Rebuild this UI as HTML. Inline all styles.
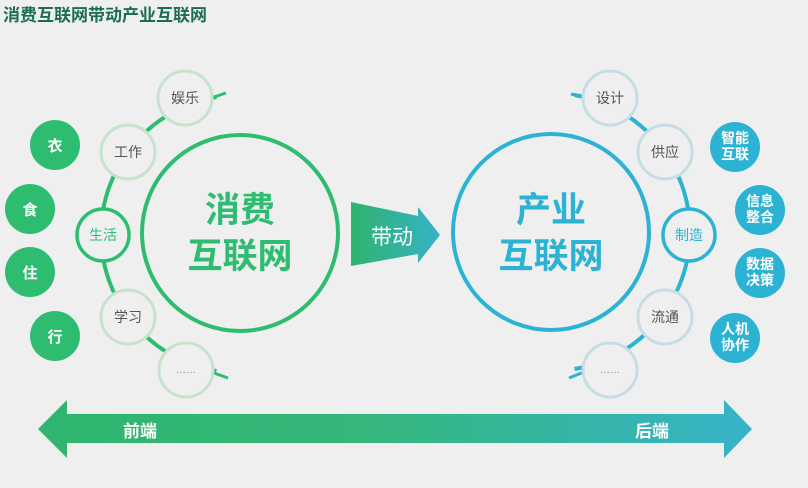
<!DOCTYPE html>
<html><head><meta charset="utf-8"><style>
html,body{margin:0;padding:0;background:#efefef;width:808px;height:488px;overflow:hidden}
svg text{font-family:"Liberation Sans","Noto Sans CJK SC",sans-serif}
</style></head><body>
<svg width="808" height="488" viewBox="0 0 808 488" xmlns="http://www.w3.org/2000/svg">
<defs>
<linearGradient id="g1" x1="0" x2="1" y1="0" y2="0"><stop offset="0" stop-color="#2fb56f"/><stop offset="0.45" stop-color="#35b67a"/><stop offset="1" stop-color="#36b3c8"/></linearGradient>
<linearGradient id="g2" x1="0" x2="1" y1="0" y2="0"><stop offset="0" stop-color="#2fb46d"/><stop offset="1" stop-color="#37b1c9"/></linearGradient>
</defs>
<text x="3" y="21" font-size="17" font-weight="bold" fill="#1c6e4c">消费互联网带动产业互联网</text>

<!-- left -->
<path d="M216.5 97 A139 139 0 0 0 216.5 371" fill="none" stroke="#2ebd70" stroke-width="4"/>
<path d="M211 98 L226 93" stroke="#2ebd70" stroke-width="3"/>
<path d="M211 372 L228 378" stroke="#2ebd70" stroke-width="3"/>
<circle cx="240" cy="233" r="98" fill="#efefef" stroke="#2ebd70" stroke-width="4"/>
<text x="240" y="222" font-size="35" font-weight="bold" fill="#2ebd70" text-anchor="middle">消费</text>
<text x="240" y="268" font-size="35" font-weight="bold" fill="#2ebd70" text-anchor="middle">互联网</text>
<g fill="#efefef" stroke="#c6e4cd" stroke-width="3">
<circle cx="185" cy="98" r="27"/><circle cx="128" cy="152" r="27"/><circle cx="128" cy="317" r="27"/><circle cx="186" cy="370" r="27"/>
</g>
<circle cx="103" cy="235" r="26" fill="#efefef" stroke="#2ebd70" stroke-width="3.5"/>
<g font-size="14" fill="#555" text-anchor="middle">
<text x="185" y="103">娱乐</text><text x="128" y="157">工作</text><text x="128" y="322">学习</text><text x="186" y="373" font-size="10" fill="#888">……</text>
</g>
<text x="103" y="240" font-size="14" fill="#2ebd70" text-anchor="middle">生活</text>
<g fill="#2ebd70"><circle cx="55" cy="145" r="25"/><circle cx="30" cy="209" r="25"/><circle cx="30" cy="272" r="25"/><circle cx="55" cy="336" r="25"/></g>
<g font-size="15" font-weight="bold" fill="#fff" text-anchor="middle">
<text x="55" y="151">衣</text><text x="30" y="215">食</text><text x="30" y="278">住</text><text x="55" y="342">行</text>
</g>

<!-- middle arrow -->
<polygon points="351,202 418,216 418,207 440,235 418,263 418,254 351,266" fill="url(#g2)"/>
<text x="392" y="244" font-size="21" fill="#fff" text-anchor="middle">带动</text>

<!-- right -->
<path d="M574.5 95 A139 139 0 0 1 574.5 369" fill="none" stroke="#2cb3d3" stroke-width="4"/>
<path d="M584 97 L571 94" stroke="#2cb3d3" stroke-width="3"/>
<path d="M584 372 L569 378" stroke="#2cb3d3" stroke-width="3"/>
<circle cx="551" cy="232" r="98" fill="#efefef" stroke="#2cb3d3" stroke-width="4"/>
<text x="551" y="222" font-size="35" font-weight="bold" fill="#2cb3d3" text-anchor="middle">产业</text>
<text x="551" y="268" font-size="35" font-weight="bold" fill="#2cb3d3" text-anchor="middle">互联网</text>
<g fill="#efefef" stroke="#c6dde6" stroke-width="3">
<circle cx="610" cy="98" r="27"/><circle cx="665" cy="152" r="27"/><circle cx="665" cy="317" r="27"/><circle cx="610" cy="370" r="27"/>
</g>
<circle cx="689" cy="235" r="26" fill="#efefef" stroke="#2cb3d3" stroke-width="3.5"/>
<g font-size="14" fill="#555" text-anchor="middle">
<text x="610" y="103">设计</text><text x="665" y="157">供应</text><text x="665" y="322">流通</text><text x="610" y="373" font-size="10" fill="#888">……</text>
</g>
<text x="689" y="240" font-size="14" fill="#2cb3d3" text-anchor="middle">制造</text>
<g fill="#2cb3d3"><circle cx="735" cy="147" r="25"/><circle cx="760" cy="210" r="25"/><circle cx="760" cy="273" r="25"/><circle cx="735" cy="338" r="25"/></g>
<g font-size="14" font-weight="bold" fill="#fff" text-anchor="middle">
<text x="735" y="143">智能</text><text x="735" y="159">互联</text>
<text x="760" y="206">信息</text><text x="760" y="222">整合</text>
<text x="760" y="269">数据</text><text x="760" y="285">决策</text>
<text x="735" y="334">人机</text><text x="735" y="350">协作</text>
</g>

<!-- bottom arrow -->
<polygon points="38,429 67,400 67,414 724,414 724,400 752,429 724,458 724,443 67,443 67,458" fill="url(#g1)"/>
<text x="140" y="437" font-size="17" font-weight="bold" fill="#fff" text-anchor="middle">前端</text>
<text x="652" y="437" font-size="17" font-weight="bold" fill="#fff" text-anchor="middle">后端</text>
</svg>
</body></html>
